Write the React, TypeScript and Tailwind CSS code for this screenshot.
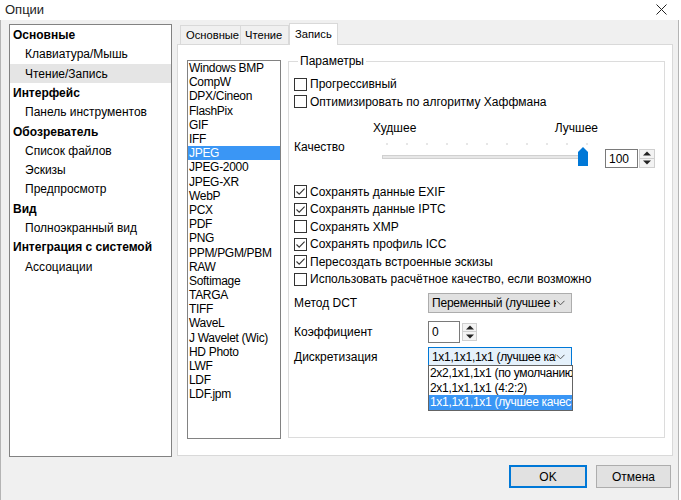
import React from "react";

const tree: { t: string; b?: boolean; sel?: boolean }[] = [
  { t: "Основные", b: true },
  { t: "Клавиатура/Мышь" },
  { t: "Чтение/Запись", sel: true },
  { t: "Интерфейс", b: true },
  { t: "Панель инструментов" },
  { t: "Обозреватель", b: true },
  { t: "Список файлов" },
  { t: "Эскизы" },
  { t: "Предпросмотр" },
  { t: "Вид", b: true },
  { t: "Полноэкранный вид" },
  { t: "Интеграция с системой", b: true },
  { t: "Ассоциации" },
];

const formats = [
  "Windows BMP",
  "CompW",
  "DPX/Cineon",
  "FlashPix",
  "GIF",
  "IFF",
  "JPEG",
  "JPEG-2000",
  "JPEG-XR",
  "WebP",
  "PCX",
  "PDF",
  "PNG",
  "PPM/PGM/PBM",
  "RAW",
  "Softimage",
  "TARGA",
  "TIFF",
  "WaveL",
  "J Wavelet (Wic)",
  "HD Photo",
  "LWF",
  "LDF",
  "LDF.jpm",
];

function Check({ checked, label }: { checked?: boolean; label: string }) {
  return (
    <div className="flex h-[17.5px] items-center">
      <div className="flex h-[13px] w-[13px] shrink-0 items-center justify-center border border-[#333333] bg-white">
        {checked && (
          <svg width="11" height="11" viewBox="0 0 11 11">
            <path d="M1.5 5.5 L4.2 8.2 L9.6 2.6" fill="none" stroke="#333333" strokeWidth="1.1" />
          </svg>
        )}
      </div>
      <span className="ml-[3px] whitespace-nowrap">{label}</span>
    </div>
  );
}

function Arrow({ up }: { up?: boolean }) {
  return (
    <svg width="8" height="5" viewBox="0 0 8 5">
      {up ? <path d="M0 4.5 L4 0.5 L8 4.5 Z" fill="#222" /> : <path d="M0 0.5 L4 4.5 L8 0.5 Z" fill="#222" />}
    </svg>
  );
}

function Chevron() {
  return (
    <svg width="9" height="6" viewBox="0 0 9 6">
      <path d="M0.5 0.8 L4.5 4.8 L8.5 0.8" fill="none" stroke="#555" strokeWidth="1" />
    </svg>
  );
}

export default function App() {
  return (
    <div className="h-[500px] w-[681px] overflow-hidden bg-white font-['Liberation_Sans',Arial,sans-serif] text-[12px] leading-[14px] text-black">
      {/* Title bar */}
      <div className="flex h-[20px] items-center justify-between pl-[5px] pr-[14px]">
        <span className="text-[13px] text-[#222]">Опции</span>
        <svg width="11" height="11" viewBox="0 0 11 11" className="mt-[-2px]">
          <path d="M0.5 0.5 L10.5 10.5 M10.5 0.5 L0.5 10.5" stroke="#222" strokeWidth="1" />
        </svg>
      </div>

      {/* Body */}
      <div className="flex h-[480px] w-[679px] flex-col border-x border-[#b4b4b4] bg-[#f0f0f0] pt-[4px]">
        <div className="flex pl-[8px]">
          {/* Tree */}
          <div className="h-[433px] w-[163px] border border-[#828282] bg-white pt-[0.4px]">
            {tree.map((it) => (
              <div
                key={it.t}
                className={
                  "flex h-[19.3px] items-center whitespace-nowrap " +
                  (it.b ? "pl-[3px] font-bold " : "pl-[15px] ") +
                  (it.sel ? "bg-[#e5e5e5]" : "")
                }
              >
                {it.t}
              </div>
            ))}
          </div>

          {/* Tabs area */}
          <div className="ml-[5px] mt-[-1px] flex w-[496px] flex-col">
            <div className="flex h-[21px] items-end pl-[3px] text-[11.2px]">
              <div className="flex h-[19px] w-[61px] items-center border border-b-0 border-[#d9d9d9] bg-[#f0f0f0] pl-[5px]">
                Основные
              </div>
              <div className="flex h-[19px] w-[48px] items-center border border-b-0 border-l-0 border-[#d9d9d9] bg-[#f0f0f0] pl-[4px]">
                Чтение
              </div>
              <div className="relative z-10 mb-[-1px] flex h-[22px] w-[49px] items-center border border-b-0 border-[#d9d9d9] bg-white pb-[2px] pl-[5px]">
                Запись
              </div>
            </div>
            <div className="flex h-[412px] border border-[#d9d9d9] bg-white pl-[9px] pt-[15px]">
              {/* Format list */}
              <div className="h-[379px] w-[94px] shrink-0 border border-[#828282] bg-white tracking-[-0.3px]">
                {formats.map((f) => (
                  <div
                    key={f}
                    className={
                      "flex h-[14.2px] items-center whitespace-nowrap pl-[1px] " +
                      (f === "JPEG" ? "bg-[#3a96f5] text-white" : "")
                    }
                  >
                    {f}
                  </div>
                ))}
              </div>

              {/* Group box */}
              <fieldset className="ml-[7px] mt-[-6px] h-[384px] w-[377px] shrink-0 border border-[#dcdcdc] pl-[5px] pt-[7.5px]">
                <legend className="ml-[4px] px-[2px] leading-[14px]">Параметры</legend>
                <Check label="Прогрессивный" />
                <Check label="Оптимизировать по алгоритму Хаффмана" />

                {/* Quality */}
                <div className="flex h-[72.5px]">
                  <div className="flex w-[79px] items-center">Качество</div>
                  <div className="flex w-[227px] flex-col">
                    <div className="mt-[10.5px] flex h-[14px] justify-between pr-[2px]">
                      <span>Худшее</span>
                      <span>Лучшее</span>
                    </div>
                    <svg width="215" height="28" viewBox="0 0 215 28" className="ml-[5px] mt-[6px]">
                      {Array.from({ length: 11 }).map((_, i) => (
                        <rect key={i} x={8.5 + 20 * i} y={2.5} width="1" height="1" fill="#9a9a9a" />
                      ))}
                      <rect x="4.5" y="14.5" width="202" height="3" fill="#e7e7e7" stroke="#d0d0d0" strokeWidth="1" />
                      <path d="M200 11 L205 6 L210 11 L210 25 L200 25 Z" fill="#0078d7" />
                    </svg>
                  </div>
                  <div className="ml-[5px] mt-[38.5px] flex h-[19px]">
                    <div className="flex w-[33px] items-center border border-[#7a7a7a] bg-white pl-[3px]">100</div>
                    <div className="ml-[1px] flex w-[16px] flex-col">
                      <div className="flex h-[9.5px] items-center justify-center border border-[#cfcfcf] bg-[#f3f3f3]">
                        <Arrow up />
                      </div>
                      <div className="flex h-[9.5px] items-center justify-center border border-t-0 border-[#cfcfcf] bg-[#f3f3f3]">
                        <Arrow />
                      </div>
                    </div>
                  </div>
                </div>

                <Check checked label="Сохранять данные EXIF" />
                <Check checked label="Сохранять данные IPTC" />
                <Check label="Сохранять XMP" />
                <Check checked label="Сохранять профиль ICC" />
                <Check checked label="Пересоздать встроенные эскизы" />
                <Check label="Использовать расчётное качество, если возможно" />

                {/* DCT */}
                <div className="mt-[5px] flex h-[20px] items-center">
                  <div className="w-[134px]">Метод DCT</div>
                  <div className="flex h-[20px] w-[144px] items-center border border-[#adadad] bg-[#e1e1e1] pl-[3px] pr-[6px]">
                    <div className="w-[125px] overflow-hidden whitespace-nowrap tracking-[-0.2px]">Переменный (лучшее качество)</div>
                    <div className="ml-auto flex items-center">
                      <Chevron />
                    </div>
                  </div>
                </div>

                {/* Coefficient */}
                <div className="mt-[8px] flex h-[22px] items-center">
                  <div className="w-[134px]">Коэффициент</div>
                  <div className="flex h-[22px] w-[32px] items-center border border-[#7a7a7a] bg-white pl-[3px]">0</div>
                  <div className="ml-[2px] flex h-[18px] w-[15px] flex-col">
                    <div className="flex h-[9px] items-center justify-center border border-[#cfcfcf] bg-[#f3f3f3]">
                      <Arrow up />
                    </div>
                    <div className="flex h-[9px] items-center justify-center border border-t-0 border-[#cfcfcf] bg-[#f3f3f3]">
                      <Arrow />
                    </div>
                  </div>
                </div>

                {/* Discretization */}
                <div className="mt-[4px] flex h-[19px] items-center">
                  <div className="w-[134px]">Дискретизация</div>
                  <div className="relative flex h-[19px] w-[144px] items-center border border-[#0078d7] bg-[#e5f1fb] pl-[3px] pr-[6px]">
                    <div className="w-[125px] overflow-hidden whitespace-nowrap tracking-[-0.3px]">1х1,1х1,1х1 (лучшее качество)</div>
                    <div className="ml-auto flex items-center">
                      <Chevron />
                    </div>
                    <div className="absolute left-[-1px] top-full z-20 w-[145px] border border-[#646464] bg-white tracking-[-0.3px]">
                      <div className="flex h-[14.5px] items-center overflow-hidden whitespace-nowrap pl-[1px]">
                        2х2,1х1,1х1 (по умолчанию)
                      </div>
                      <div className="flex h-[14.5px] items-center overflow-hidden whitespace-nowrap pl-[1px]">
                        2х1,1х1,1х1 (4:2:2)
                      </div>
                      <div className="flex h-[14.5px] items-center overflow-hidden whitespace-nowrap bg-[#3a96f5] pl-[1px] text-white">
                        1х1,1х1,1х1 (лучшее качество)
                      </div>
                    </div>
                  </div>
                </div>
              </fieldset>
            </div>
          </div>
        </div>

        {/* Buttons */}
        <div className="mt-[8px] flex justify-end gap-[9px] pr-[7px]">
          <div className="flex h-[23px] w-[78px] items-center justify-center border-2 border-[#0078d7] bg-[#e1e1e1]">
            OK
          </div>
          <div className="flex h-[23px] w-[75px] items-center justify-center border border-[#adadad] bg-[#e1e1e1]">
            Отмена
          </div>
        </div>
      </div>
    </div>
  );
}
